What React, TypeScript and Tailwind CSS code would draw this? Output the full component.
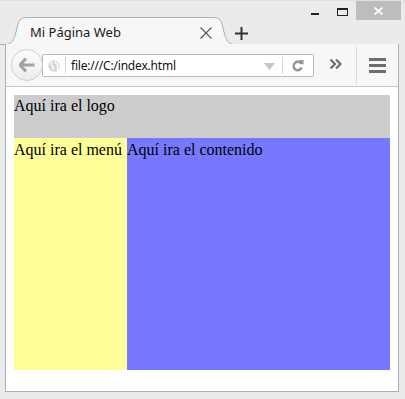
import React from "react";

export default function App() {
  return (
    <div className="relative w-[405px] h-[399px] bg-[#ebebeb] overflow-hidden" style={{ fontFamily: '"Segoe UI", "Noto Sans", sans-serif' }}>
      {/* title bar */}
      <div className="relative h-[44px] flex">
        <svg className="absolute left-0 top-0" width="405" height="46" viewBox="0 0 405 46">
          <line x1="0" y1="0.5" x2="405" y2="0.5" stroke="#e0e0e0" />
          <path
            d="M5,44.5 C12,44.5 14,40 16,32 L18,24 C19,19.5 22,17.5 27,17.5 L213,17.5 C218,17.5 221,19.5 222,24 L224,32 C226,40 228,44.5 235,44.5 L398.5,44.5 L398.5,46 L5.5,46 Z"
            fill="#f7f7f7"
          />
          <path
            d="M0,44.5 L5,44.5 C12,44.5 14,40 16,32 L18,24 C19,19.5 22,17.5 27,17.5 L213,17.5 C218,17.5 221,19.5 222,24 L224,32 C226,40 228,44.5 235,44.5 L398.5,44.5 L398.5,46"
            fill="none"
            stroke="#a9b0b8"
          />
          <path d="M5.5,44.5 L5.5,46" stroke="#a9b0b8" />
        </svg>
        <div className="relative flex items-center h-[44px] pt-[20px] w-full">
          <span className="ml-[30px] text-[13px] text-[#1a1a1a] leading-none">Mi Página Web</span>
          <svg className="absolute left-[200px] top-[27px]" width="12" height="12" viewBox="0 0 12 12">
            <path d="M0.5,0.5 L11.5,11.5 M11.5,0.5 L0.5,11.5" stroke="#555" strokeWidth="1.1" />
          </svg>
          <svg className="absolute left-[235px] top-[27px]" width="13" height="13" viewBox="0 0 13 13">
            <path d="M6.5,0 L6.5,13 M0,6.5 L13,6.5" stroke="#333" strokeWidth="2" />
          </svg>
        </div>
        {/* window controls */}
        <div className="absolute left-[311px] top-[1px] flex items-start">
          <div className="w-[8px] h-[2px] bg-[#222] mt-[12px]" />
          <div className="ml-[18px] mt-[7px] w-[11px] h-[8px] border border-[#222] border-t-2" />
          <div className="ml-[8px] w-[45px] h-[19px] bg-[#bdbdbd] flex items-center justify-center">
            <svg width="9" height="8" viewBox="0 0 9 8">
              <path d="M0.5,0.5 L8.5,7.5 M8.5,0.5 L0.5,7.5" stroke="#fff" strokeWidth="1.6" />
            </svg>
          </div>
        </div>
      </div>
      {/* toolbar */}
      <div className="ml-[5px] w-[394px] h-[43px] bg-[#f7f7f7] border-x border-[#a9b0b8] border-b border-b-[#c3c8cd] flex items-center relative">
        <div className="absolute left-[36px] top-[10px] w-[272px] h-[23px] bg-white border border-[#b7bcc3] rounded-[2px] flex items-center">
          <svg className="ml-[5px]" width="12" height="12" viewBox="0 0 11 11">
            <circle cx="5.5" cy="5.5" r="5.2" fill="#d7d7d7" />
            <path d="M3,1.5 C4,3 2.5,4 3.5,5 C5,5.5 4.5,7 5,9 M6.5,1 C6,2.5 8,3 9,4.5 C8,6 9,8 8.5,9" stroke="#fff" strokeWidth="1.3" fill="none" />
          </svg>
          <div className="ml-[5px] w-px h-[17px] bg-[#d4d7da]" />
          <span className="ml-[5px] text-[12px] text-[#111] leading-none tracking-[-0.2px]">file:///C:/index.html</span>
          <svg className="absolute left-[221px] top-[8px]" width="11" height="7" viewBox="0 0 11 7">
            <path d="M0,0 L11,0 L5.5,7 Z" fill="#c3c7cc" />
          </svg>
          <div className="absolute left-[239px] top-[2px] w-px h-[17px] bg-[#d4d7da]" />
          <svg className="absolute left-[249px] top-[4px]" width="12" height="13" viewBox="0 0 12 13">
            <path d="M9.5,5 A4.2,4.2 0 1 0 9.7,8.5" stroke="#8f959b" strokeWidth="2.4" fill="none" />
            <path d="M6.5,1 L11.5,1 L11.5,6 Z" fill="#8f959b" />
          </svg>
        </div>
        {/* back button */}
        <div className="absolute left-[5px] top-[5px] w-[32px] h-[32px] rounded-full border border-[#cfcfcf] bg-gradient-to-b from-[#fdfdfd] to-[#ededed] flex items-center justify-center">
          <svg width="16" height="14" viewBox="0 0 16 14">
            <path d="M7,0.5 L1,7 L7,13.5 M1.5,7 L15.5,7" stroke="#a3a3a3" strokeWidth="3.2" fill="none" strokeLinejoin="round" />
          </svg>
        </div>
        <svg className="absolute left-[324px] top-[15px]" width="12" height="10" viewBox="0 0 12 10">
          <path d="M0.5,0.5 L5,5 L0.5,9.5 M6,0.5 L10.5,5 L6,9.5" stroke="#6e6e6e" strokeWidth="2.2" fill="none" />
        </svg>
        <div className="absolute left-[350px] top-[1px] w-px h-[40px] bg-[#dcdcdc]" />
        <div className="absolute left-[363px] top-[14px] flex flex-col gap-[3px]">
          <div className="w-[17px] h-[3px] bg-[#6d6d6d]" />
          <div className="w-[17px] h-[3px] bg-[#6d6d6d]" />
          <div className="w-[17px] h-[3px] bg-[#6d6d6d]" />
        </div>
      </div>
      {/* content */}
      <div className="ml-[5px] w-[394px] h-[305px] bg-white border-x border-b border-[#a9b0b8] p-[8px]" style={{ fontFamily: '"Liberation Serif", "Times New Roman", serif' }}>
        <div className="bg-[#cccccc] h-[43px] text-[16px] text-black leading-[22px]">Aquí ira el logo</div>
        <div className="flex h-[232px] text-[16px] text-black leading-[23px]">
          <div className="w-[113px] bg-[#ffff99]">Aquí ira el menú</div>
          <div className="flex-1 bg-[#7777ff]">Aquí ira el contenido</div>
        </div>
      </div>
    </div>
  );
}
